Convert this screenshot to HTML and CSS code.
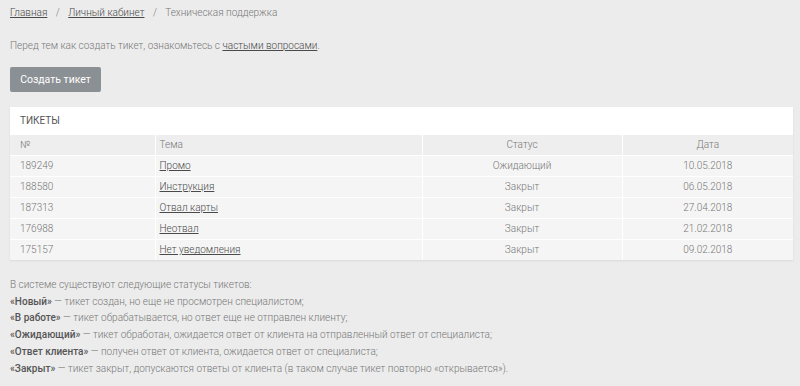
FILE: index.html
```html
<!DOCTYPE html>
<html lang="ru">
<head>
  <meta charset="UTF-8" />
  <meta name="viewport" content="width=device-width, initial-scale=1.0" />
  <title>Техническая поддержка</title>
  <link rel="stylesheet" href="styles.css">
</head>
<body>
  <div class="breadcrumb">
    <a href="#">Главная</a>
    <span class="sep">/</span>
    <a href="#">Личный кабинет</a>
    <span class="sep">/</span>
    <span>Техническая поддержка</span>
  </div>

  <p class="intro">Перед тем как создать тикет, ознакомьтесь с <a href="#">частыми вопросами</a>.</p>

  <button class="btn">Создать тикет</button>

  <div class="panel">
    <div class="panel-title">ТИКЕТЫ</div>
    <table class="tickets">
      <colgroup>
        <col class="c-num">
        <col class="c-theme">
        <col class="c-status">
        <col class="c-date">
      </colgroup>
      <thead>
        <tr>
          <th class="num">№</th>
          <th class="theme">Тема</th>
          <th>Статус</th>
          <th>Дата</th>
        </tr>
      </thead>
      <tbody>
        <tr>
          <td class="num">189249</td>
          <td class="theme"><a href="#">Промо</a></td>
          <td>Ожидающий</td>
          <td>10.05.2018</td>
        </tr>
        <tr>
          <td class="num">188580</td>
          <td class="theme"><a href="#">Инструкция</a></td>
          <td>Закрыт</td>
          <td>06.05.2018</td>
        </tr>
        <tr>
          <td class="num">187313</td>
          <td class="theme"><a href="#">Отвал карты</a></td>
          <td>Закрыт</td>
          <td>27.04.2018</td>
        </tr>
        <tr>
          <td class="num">176988</td>
          <td class="theme"><a href="#">Неотвал</a></td>
          <td>Закрыт</td>
          <td>21.02.2018</td>
        </tr>
        <tr>
          <td class="num">175157</td>
          <td class="theme"><a href="#">Нет уведомления</a></td>
          <td>Закрыт</td>
          <td>09.02.2018</td>
        </tr>
      </tbody>
    </table>
  </div>

  <div class="statuses">
    <p>В системе существуют следующие статусы тикетов:</p>
    <p><b>«Новый»</b> — тикет создан, но еще не просмотрен специалистом;</p>
    <p><b>«В работе»</b> — тикет обрабатывается, но ответ еще не отправлен клиенту;</p>
    <p><b>«Ожидающий»</b> — тикет обработан, ожидается ответ от клиента на отправленный ответ от специалиста;</p>
    <p><b>«Ответ клиента»</b> — получен ответ от клиента, ожидается ответ от специалиста;</p>
    <p><b>«Закрыт»</b> — тикет закрыт, допускаются ответы от клиента (в таком случае тикет повторно «открывается»).</p>
  </div>
</body>
</html>
```

FILE: styles.css
```css
* {
  box-sizing: border-box;
}

body {
  margin: 0;
  padding: 5px 7px 0 10px;
  background: #ececec;
  font-family: Roboto, 'Liberation Sans', sans-serif;
  font-size: 10px;
  font-weight: 300;
  color: #777;
}

a {
  color: #4a4a4a;
  text-decoration: underline;
}

.breadcrumb {
  line-height: 15px;
}

.breadcrumb .sep {
  margin: 0 6px;
}

.intro {
  margin: 18px 0 0;
  line-height: 15px;
}

.btn {
  display: block;
  margin-top: 14px;
  width: 91px;
  height: 25px;
  border: none;
  border-radius: 2px;
  background: #8b9095;
  color: #fff;
  font-family: inherit;
  font-size: 10.5px;
  font-weight: 400;
  cursor: pointer;
}

.panel {
  margin-top: 15px;
  background: #f5f5f5;
  box-shadow: 0 1px 2px rgba(0, 0, 0, 0.08);
}

.panel-title {
  height: 28px;
  line-height: 28px;
  padding-left: 10px;
  background: #fff;
  color: #555;
  font-weight: 400;
}

.tickets {
  width: 100%;
  border-collapse: collapse;
  table-layout: fixed;
}

.c-num { width: 145px; }
.c-theme { width: 267px; }
.c-status { width: 200px; }

.tickets th,
.tickets td {
  padding: 0 4px;
  border: 1px solid #fff;
  text-align: center;
  font-weight: 300;
  color: #777;
}

.tickets tr > :first-child { border-left: none; }
.tickets tr > :last-child { border-right: none; }
.tickets tbody tr:last-child td { border-bottom: none; }

.tickets th {
  height: 20px;
  background: #eeeeee;
  border-top: none;
}

.tickets td {
  height: 21px;
  background: #f5f5f5;
}

.tickets .num {
  text-align: left;
  padding-left: 10px;
}

.tickets .theme {
  text-align: left;
}

.statuses {
  margin-top: 17px;
  line-height: 16.7px;
}

.statuses p {
  margin: 0;
}

.statuses b {
  font-weight: 500;
  color: #555;
}
```
